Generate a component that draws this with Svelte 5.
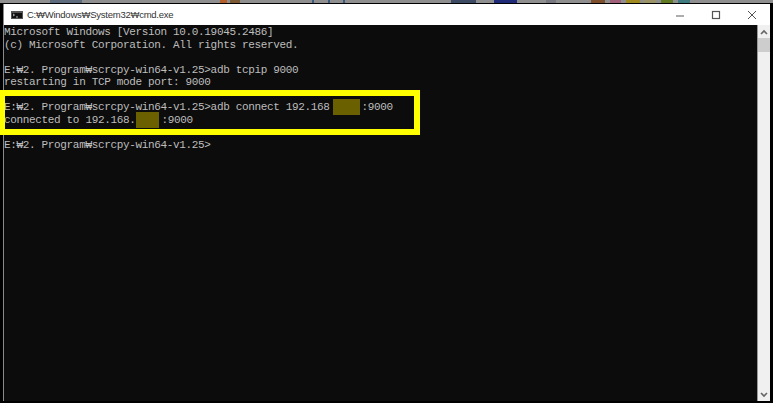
<script>
	const lines = [
		{ text: 'Microsoft Windows [Version 10.0.19045.2486]' },
		{ text: '(c) Microsoft Corporation. All rights reserved.' },
		{ text: '' },
		{ text: 'E:₩2. Program₩scrcpy-win64-v1.25>adb tcpip 9000' },
		{ text: 'restarting in TCP mode port: 9000' },
		{ text: '' },
		{ text: 'E:₩2. Program₩scrcpy-win64-v1.25>adb connect 192.168', mask: 27, gap: 3, tail: ':9000' },
		{ text: 'connected to 192.168.', mask: 23, gap: 1, tail: ':9000' },
		{ text: '' },
		{ text: 'E:₩2. Program₩scrcpy-win64-v1.25>' }
	];

	// desktop showing behind the top edge of the window
	const grey = '#8f8f8f';
	const strip = [
		{ w: 50, c: grey }, { w: 32, c: '#5d6b7c' }, { w: 138, c: grey }, { w: 7, c: '#b5602a' },
		{ w: 3, c: grey }, { w: 10, c: '#7a5a34' }, { w: 72, c: grey }, { w: 2, c: '#3c5a80' },
		{ w: 14, c: grey }, { w: 2, c: '#3c5a80' }, { w: 13, c: grey }, { w: 2, c: '#3c5a80' },
		{ w: 107, c: grey }, { w: 25, c: '#3d4a63' }, { w: 18, c: '#8f8f8f' }, { w: 23, c: '#1f2a78' },
		{ w: 29, c: grey }, { w: 10, c: '#77777f' }, { w: 35, c: grey }, { w: 14, c: '#7d4f2c' },
		{ w: 5, c: grey }, { w: 11, c: '#a0607a' }, { w: 5, c: grey }, { w: 14, c: '#a08a20' },
		{ w: 3, c: grey }, { w: 13, c: '#9a9468' }, { w: 5, c: grey }, { w: 12, c: '#5f7a20' },
		{ w: 5, c: grey }, { w: 12, c: '#3f7a80' }, { w: 83, c: grey }
	];
</script>

<div class="shot">
	<div class="strip">
		{#each strip as s}
			<span style="width: {s.w}px; background: {s.c}"></span>
		{/each}
	</div>
	<div class="window">
		<header class="titlebar">
			<svg class="appicon" width="12" height="8" viewBox="0 0 12 8">
				<rect width="12" height="8" fill="#555" />
				<rect x="1" y="2" width="10" height="5" fill="#111" />
				<path d="M2 3l1.5 1L2 5M5 6h2" stroke="#ddd" stroke-width="0.8" fill="none" />
			</svg>
			<span class="title">C:₩Windows₩System32₩cmd.exe</span>
			<div class="controls">
				<svg width="10" height="10" viewBox="0 0 10 10"><path d="M1 6h8" stroke="#777" stroke-width="1.2" /></svg>
				<svg width="10" height="10" viewBox="0 0 10 10"><rect x="1.5" y="1.5" width="7" height="7" fill="none" stroke="#555" stroke-width="1.2" /></svg>
				<svg width="10" height="10" viewBox="0 0 10 10"><path d="M1 1l8 8M9 1l-8 8" stroke="#555" /></svg>
			</div>
		</header>
		<div class="body">
			<div class="console">
				{#each lines as line}
					<div class="line">
						{line.text}{#if line.mask}<span class="mask" style="width: {line.mask}px; margin-left: {line.gap}px"></span>{line.tail}{/if}
					</div>
				{/each}
			</div>
			<div class="scrollbar">
				<span class="arrow">
					<svg width="8" height="6" viewBox="0 0 8 6"><path d="M1 5l3-3 3 3" stroke="#666" stroke-width="1.6" fill="none" /></svg>
				</span>
				<span class="thumb"></span>
				<span class="arrow down">
					<svg width="8" height="6" viewBox="0 0 8 6"><path d="M1 1l3 3 3-3" stroke="#666" stroke-width="1.6" fill="none" /></svg>
				</span>
			</div>
		</div>
	</div>
	<div class="highlight"></div>
</div>

<style>
	:global(body) { margin: 0; background: #000; }
	.shot { position: relative; width: 773px; height: 403px; overflow: hidden; background: #000; }
	.strip { display: flex; height: 3px; margin-bottom: 1px; }
	.window { display: flex; flex-direction: column; width: 766px; height: 397px; margin-left: 3px; border-left: 1px solid #8a8a8a; }
	.titlebar { display: flex; align-items: center; flex: none; height: 21px; background: #fff; }
	.appicon { margin-left: 7px; }
	.title { margin-left: 4px; font: 9.5px "Liberation Sans", "Noto Sans CJK KR", sans-serif; letter-spacing: -0.25px; color: #333; }
	.controls { display: flex; gap: 26px; margin-left: auto; margin-right: 13px; }
	.body { flex: 1; display: flex; min-height: 0; }
	.console { flex: 1; padding-top: 1px; background: #0c0c0c; }
	.line { height: 12.5px; font: 11px/12.5px "Liberation Mono", "Noto Sans CJK KR", monospace; letter-spacing: -0.34px; color: #bdbdbd; white-space: pre; }
	.mask { display: inline-block; height: 16px; margin-top: -2px; margin-right: 2px; vertical-align: top; background: #6b6000; }
	.scrollbar { display: flex; flex-direction: column; width: 12px; border-left: 1px solid #999; background: #f0f0f0; }
	.arrow { display: flex; align-items: center; justify-content: center; flex: none; height: 13px; }
	.thumb { height: 14px; background: #cdcdcd; }
	.down { margin-top: auto; }
	.highlight { position: absolute; left: -1px; top: 90px; width: 409px; height: 33px; border: 6px solid #ffff00; }
</style>
